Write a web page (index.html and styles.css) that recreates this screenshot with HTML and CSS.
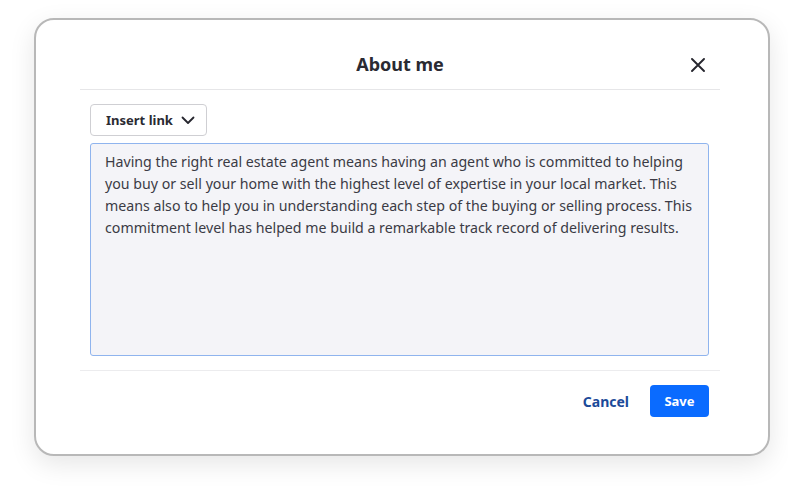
FILE: index.html
```html
<!DOCTYPE html>
<html>
<head>
<meta charset="utf-8">
<link rel="stylesheet" href="styles.css">
</head>
<body>
<div class="dialog">
  <div class="header">
    <h1 class="title">About me</h1>
    <button class="close" aria-label="Close">
      <svg width="14" height="14" viewBox="0 0 14 14"><path d="M1 1L13 13M13 1L1 13" stroke="#26262e" stroke-width="1.9" stroke-linecap="round"/></svg>
    </button>
  </div>
  <div class="body">
    <button class="insert">Insert link
      <svg class="chev" width="14" height="9" viewBox="0 0 14 9"><path d="M1.5 1.5L7 7L12.5 1.5" fill="none" stroke="#26262e" stroke-width="1.8" stroke-linecap="round" stroke-linejoin="round"/></svg>
    </button>
    <div class="editor">Having the right real estate agent means having an agent who is committed to helping you buy or sell your home with the highest level of expertise in your local market. This means also to help you in understanding each step of the buying or selling process. This commitment level has helped me build a remarkable track record of delivering results.</div>
  </div>
  <div class="footer">
    <button class="cancel">Cancel</button>
    <button class="save">Save</button>
  </div>
</div>
</body>
</html>
```
FILE: styles.css
```css
html, body {
  margin: 0;
  padding: 0;
  background: #ffffff;
}
body {
  box-sizing: border-box;
  min-height: 490px;
  padding: 18px 0 0 34px;
  font-family: "Noto Sans", "Open Sans", sans-serif;
}
.dialog {
  box-sizing: border-box;
  width: 736px;
  height: 438px;
  border: 2px solid #b8b8b8;
  border-radius: 20px;
  background: #fff;
  box-shadow: 0 8px 26px rgba(0, 0, 0, 0.10);
  padding: 0 48px 0 44px;
  display: flex;
  flex-direction: column;
}
.header {
  position: relative;
  display: flex;
  justify-content: center;
  align-items: center;
  padding: 32px 0 13px;
  border-bottom: 1px solid #e6e6e8;
}
.title {
  margin: 0;
  font-size: 18px;
  line-height: 24px;
  font-weight: 700;
  color: #2a2a32;
}
.close {
  position: absolute;
  right: 15px;
  top: 38px;
  border: 0;
  background: none;
  padding: 0;
  width: 14px;
  height: 14px;
  display: flex;
}
.body {
  padding: 14px 11px 14px 10px;
  border-bottom: 1px solid #ececee;
  display: flex;
  flex-direction: column;
  align-items: flex-start;
  gap: 7px;
}
.insert {
  box-sizing: border-box;
  height: 32px;
  width: 117px;
  border: 1px solid #cfcfd3;
  border-radius: 4px;
  background: #fff;
  font-family: inherit;
  font-size: 13px;
  font-weight: 700;
  color: #2a2a32;
  display: flex;
  align-items: center;
  padding: 0 0 0 15px;
  gap: 8px;
}
.chev { margin-top: 1px; }
.editor {
  box-sizing: border-box;
  width: 100%;
  height: 213px;
  border: 1px solid #8fb4ee;
  border-radius: 3px;
  background: #f4f4f8;
  padding: 7px 10px 7px 14px;
  font-size: 14.2px;
  line-height: 22px;
  color: #3b3b45;
}
.footer {
  display: flex;
  justify-content: flex-end;
  align-items: center;
  padding: 14px 11px 0 0;
  gap: 21px;
}
.cancel {
  border: 0;
  background: none;
  font-family: inherit;
  font-size: 14px;
  font-weight: 700;
  color: #1b4a99;
  padding: 0;
}
.save {
  box-sizing: border-box;
  height: 32px;
  width: 59px;
  border: 0;
  border-radius: 4px;
  background: #0a6bff;
  color: #fff;
  font-family: inherit;
  font-size: 13px;
  font-weight: 700;
  padding: 0;
}
```
